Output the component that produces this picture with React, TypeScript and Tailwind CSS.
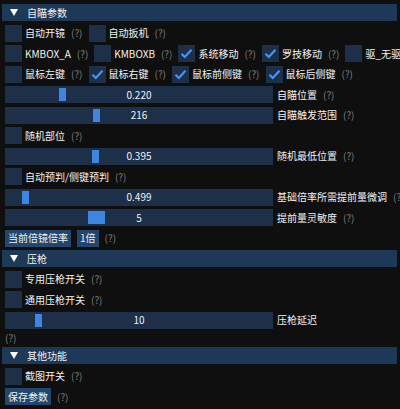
import React from "react";

const FONT = { fontFamily: '"Noto Sans CJK SC", "Noto Sans", sans-serif' };

const Help = () => <span className="text-[#7d7d7d] whitespace-nowrap">(?)</span>;

const Check = ({ label, on = false }: { label: string; on?: boolean }) => (
  <div className="flex items-center shrink-0">
    <div className="w-[17px] h-[17px] bg-[#1d2f49] flex items-center justify-center shrink-0">
      {on && (
        <svg width="13" height="13" viewBox="0 0 13 13">
          <path d="M1.5 6.8 L4.8 10 L11.5 2.8" fill="none" stroke="#4296fa" strokeWidth="2.2" />
        </svg>
      )}
    </div>
    <span className="ml-[3px] whitespace-nowrap">{label}</span>
    <span className="ml-[6px]">
      <Help />
    </span>
  </div>
);

const Row = ({ children }: { children: React.ReactNode }) => (
  <div className="flex items-center gap-[6px] h-[17px] pl-[5px] whitespace-nowrap">{children}</div>
);

const Slider = ({
  value,
  label,
  left,
  grab = 7,
  help = true,
}: {
  value: string;
  label: string;
  left: number;
  grab?: number;
  help?: boolean;
}) => (
  <div className="flex items-center h-[17px] pl-[5px] whitespace-nowrap">
    <div className="relative w-[268px] h-[17px] bg-[#1d2f49] flex items-center justify-center shrink-0">
      <div
        className="absolute top-[2px] bottom-[2px] bg-[#3d85e0]"
        style={{ left: left, width: grab }}
      />
      <span className="relative">{value}</span>
    </div>
    <span className="ml-[4px]">{label}</span>
    {help && (
      <span className="ml-[6px]">
        <Help />
      </span>
    )}
  </div>
);

const Header = ({ title }: { title: string }) => (
  <div className="mx-[2px] w-[395px] h-[17px] bg-[#1e3958] flex items-center">
    <svg className="ml-[8px]" width="8" height="7" viewBox="0 0 8 7">
      <path d="M0 0 L8 0 L4 7 Z" fill="#ffffff" />
    </svg>
    <span className="ml-[9px]">{title}</span>
  </div>
);

const Button = ({ text }: { text: string }) => (
  <div className="h-[17px] px-[3px] bg-[#23466e] flex items-center">{text}</div>
);

export default function App() {
  return (
    <div
      className="w-[400px] h-[409px] overflow-hidden bg-[#0f0f0f] text-[#f2f2f2] text-[10px] leading-none flex flex-col gap-[3.5px] pt-[4px]"
      style={FONT}
    >
      <Header title="自瞄参数" />
      <Row>
        <Check label="自动开镜" />
        <Check label="自动扳机" />
      </Row>
      <Row>
        <Check label="KMBOX_A" />
        <Check label="KMBOXB" />
        <Check label="系统移动" on />
        <Check label="罗技移动" on />
        <Check label="驱_无驱" />
      </Row>
      <Row>
        <Check label="鼠标左键" />
        <Check label="鼠标右键" on />
        <Check label="鼠标前侧键" on />
        <Check label="鼠标后侧键" on />
      </Row>
      <Slider value="0.220" label="自瞄位置" left={54} />
      <Slider value="216" label="自瞄触发范围" left={88} />
      <Row>
        <Check label="随机部位" />
      </Row>
      <Slider value="0.395" label="随机最低位置" left={87} />
      <Row>
        <Check label="自动预判/侧键预判" />
      </Row>
      <Slider value="0.499" label="基础倍率所需提前量微调" left={17} />
      <Slider value="5" label="提前量灵敏度" left={83} grab={17} />
      <Row>
        <Button text="当前倍镜倍率" />
        <Button text="1倍" />
        <Help />
      </Row>
      <Header title="压枪" />
      <Row>
        <Check label="专用压枪开关" />
      </Row>
      <Row>
        <Check label="通用压枪开关" />
      </Row>
      <Slider value="10" label="压枪延迟" left={30} help={false} />
      <div className="h-[11.5px] pl-[5px] flex items-center">
        <Help />
      </div>
      <Header title="其他功能" />
      <Row>
        <Check label="截图开关" />
      </Row>
      <Row>
        <Button text="保存参数" />
        <Help />
      </Row>
    </div>
  );
}
